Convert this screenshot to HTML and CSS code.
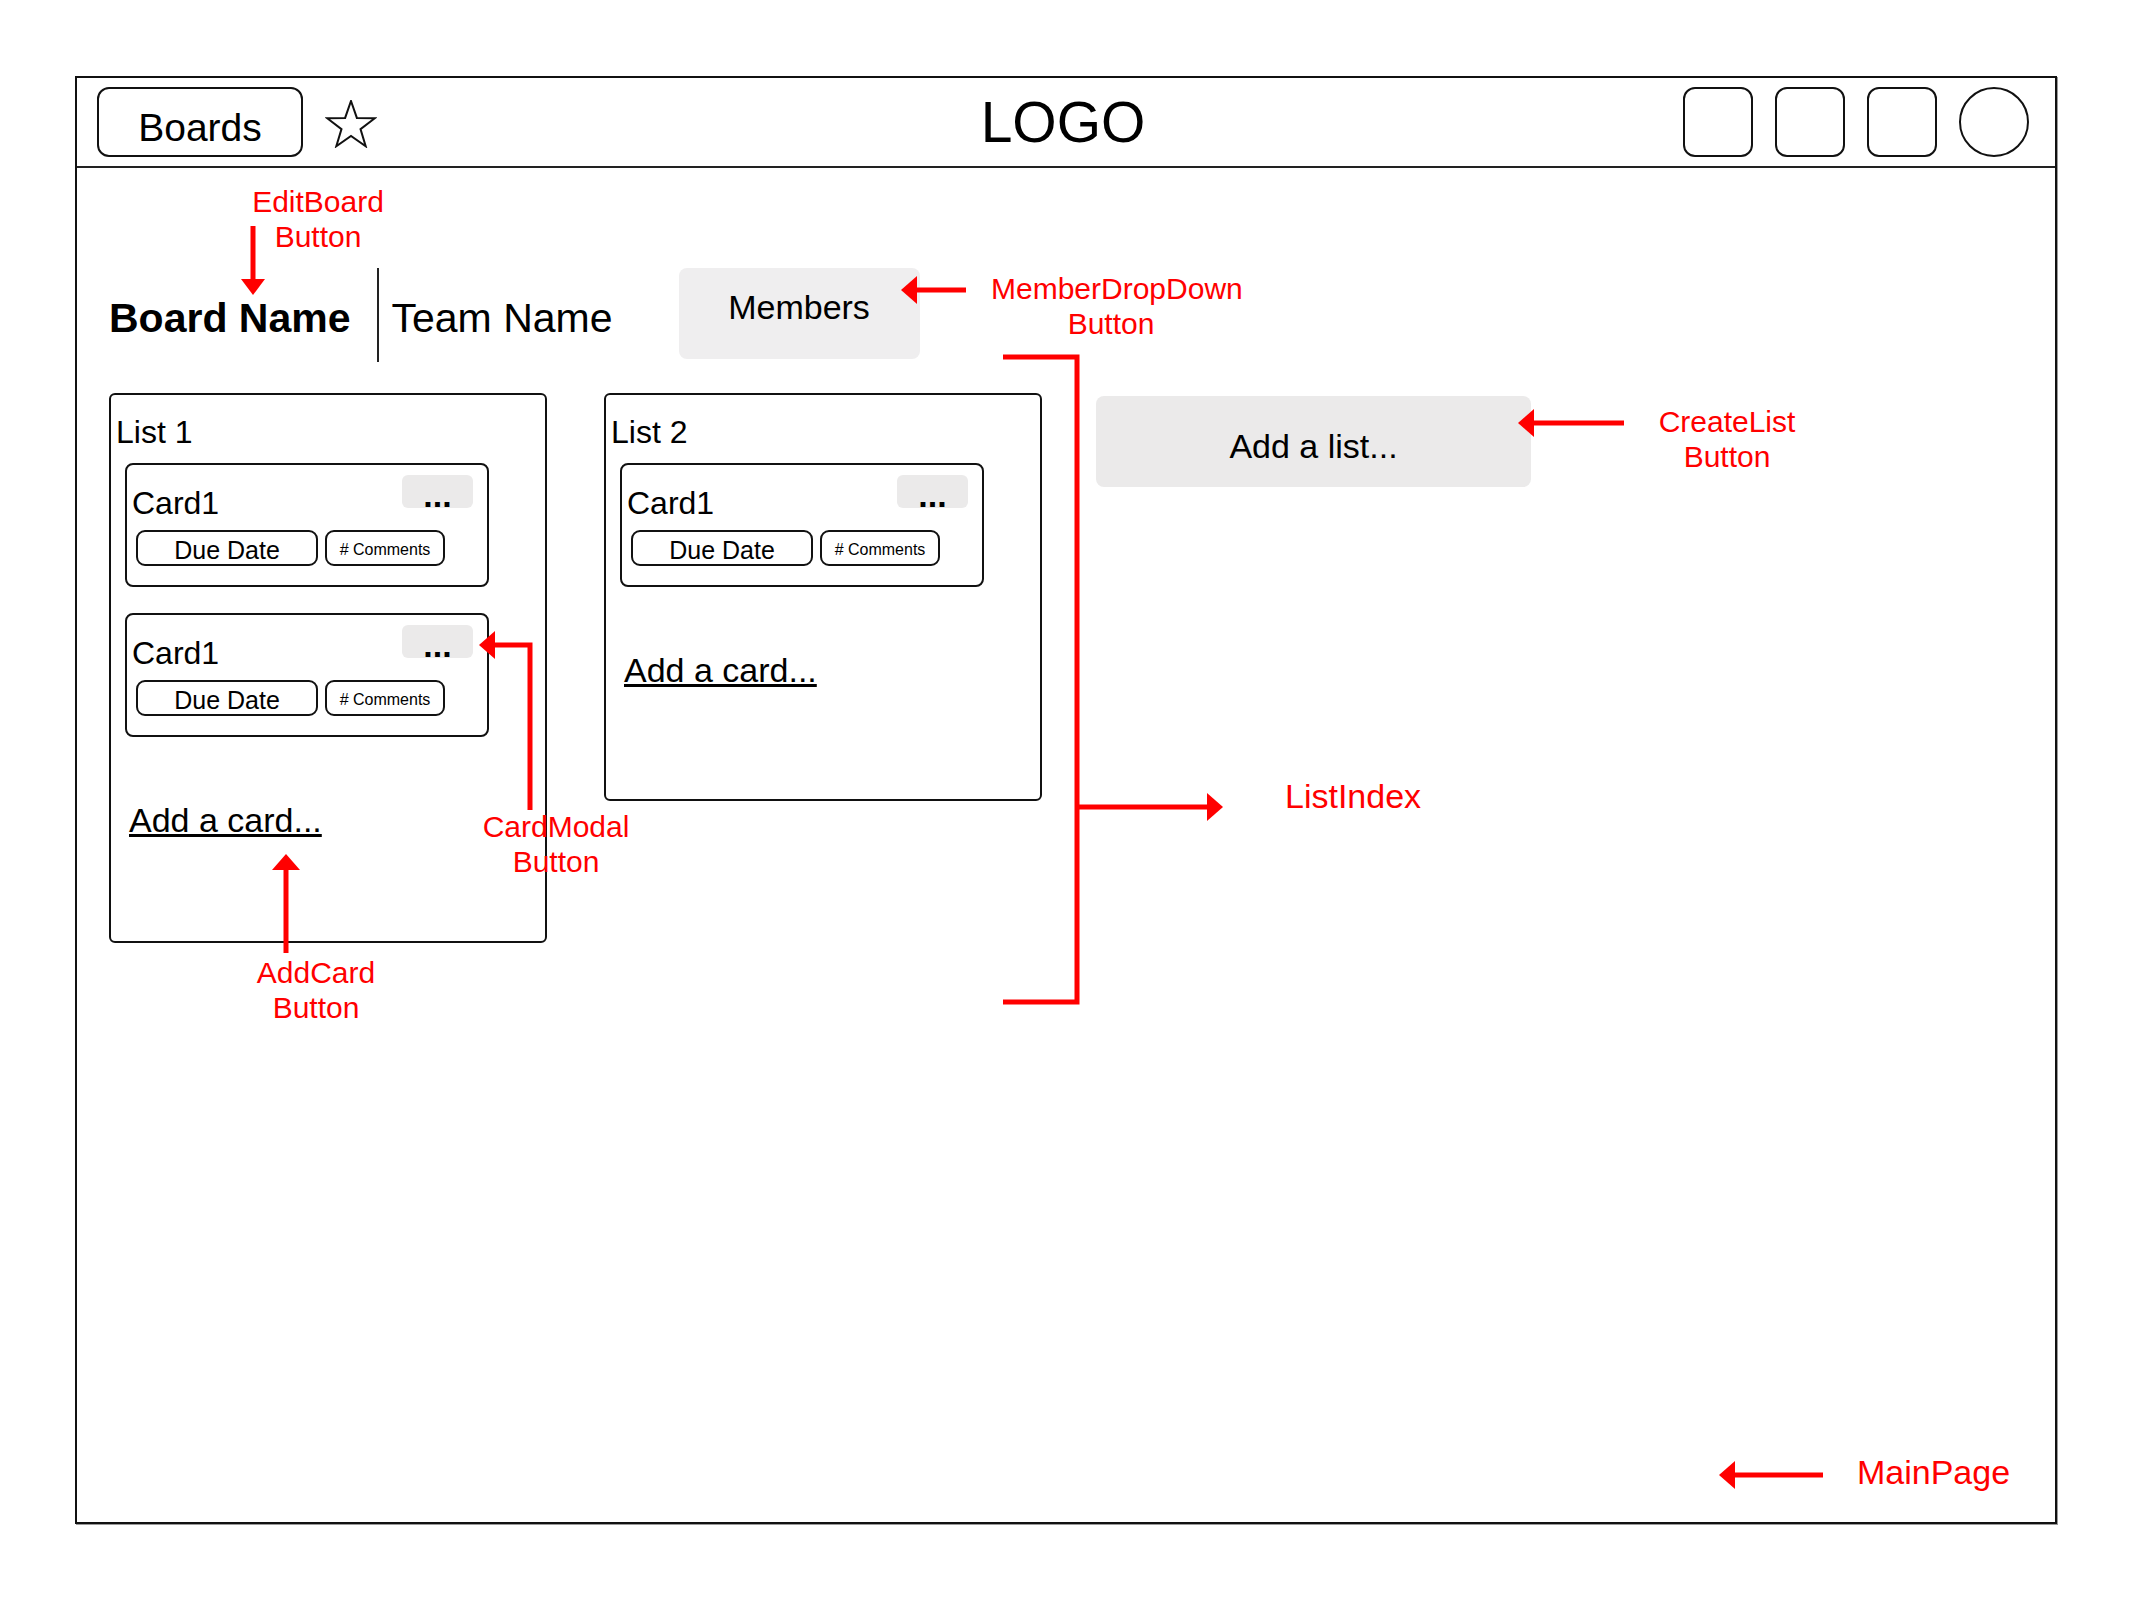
FILE: index.html
```html
<!DOCTYPE html>
<html lang="en">

<head>
    <meta charset="UTF-8">
    <meta name="viewport" content="width=device-width, initial-scale=1.0">
    <title>Board Wireframe</title>
    <link rel="stylesheet" href="styles.css">
</head>

<body>
    <div class="page">
        <div class="main-page">
            <!-- Top navigation -->
            <header class="topbar">
                <div class="topbar-left">
                    <button class="boards-btn">Boards</button>
                    <svg class="star" width="52" height="48" viewBox="0 0 52 48">
                        <polygon points="26,1 31.88,17.91 49.78,18.27 35.51,29.09 40.69,46.23 26,36 11.31,46.23 16.49,29.09 2.22,18.27 20.12,17.91" />
                    </svg>
                </div>
                <div class="logo">LOGO</div>
                <div class="topbar-right">
                    <span class="nav-icon"></span>
                    <span class="nav-icon"></span>
                    <span class="nav-icon"></span>
                    <span class="nav-icon avatar"></span>
                </div>
            </header>

            <div class="board-area">
                <div class="board-bar">
                    <div class="board-name">Board Name</div>
                    <div class="team-name">Team Name</div>
                    <button class="members-btn">Members</button>
                </div>

                <div class="lists">
                    <div class="list">
                        <div class="list-title">List 1</div>
                        <div class="card">
                            <div class="card-top">
                                <div class="card-title">Card1</div>
                                <button class="card-menu"><span>...</span></button>
                            </div>
                            <div class="card-meta">
                                <span class="pill pill-date">Due Date</span>
                                <span class="pill pill-comments"># Comments</span>
                            </div>
                        </div>
                        <div class="card">
                            <div class="card-top">
                                <div class="card-title">Card1</div>
                                <button class="card-menu"><span>...</span></button>
                            </div>
                            <div class="card-meta">
                                <span class="pill pill-date">Due Date</span>
                                <span class="pill pill-comments"># Comments</span>
                            </div>
                        </div>
                        <a href="#" class="add-card">Add a card...</a>
                    </div>

                    <div class="list">
                        <div class="list-title">List 2</div>
                        <div class="card">
                            <div class="card-top">
                                <div class="card-title">Card1</div>
                                <button class="card-menu"><span>...</span></button>
                            </div>
                            <div class="card-meta">
                                <span class="pill pill-date">Due Date</span>
                                <span class="pill pill-comments"># Comments</span>
                            </div>
                        </div>
                        <a href="#" class="add-card">Add a card...</a>
                    </div>

                    <button class="add-list">Add a list...</button>
                </div>
            </div>
        </div>

        <!-- Red annotations drawn over the wireframe -->
        <svg class="arrows" width="2134" height="1600" viewBox="0 0 2134 1600">
            <g class="arrow-lines">
                <line x1="253" y1="226" x2="253" y2="281" />
                <line x1="966" y1="290" x2="915" y2="290" />
                <polyline points="1003,357 1077,357 1077,1002 1003,1002" />
                <line x1="1077" y1="807" x2="1209" y2="807" />
                <line x1="1624" y1="423" x2="1532" y2="423" />
                <polyline points="530,810 530,645 493,645" />
                <line x1="286" y1="953" x2="286" y2="868" />
                <line x1="1823" y1="1475" x2="1733" y2="1475" />
            </g>
            <g class="arrow-heads">
                <polygon points="241,279 265,279 253,295" />
                <polygon points="901,290 917,276 917,304" />
                <polygon points="1223,807 1207,793 1207,821" />
                <polygon points="1518,423 1534,409 1534,437" />
                <polygon points="479,645 495,631 495,659" />
                <polygon points="286,854 272,870 300,870" />
                <polygon points="1719,1475 1735,1461 1735,1489" />
            </g>
        </svg>

        <div class="note note-editboard">EditBoard<br>Button</div>
        <div class="note note-members">MemberDropDown<br>Button</div>
        <div class="note note-createlist">CreateList<br>Button</div>
        <div class="note note-cardmodal">CardModal<br>Button</div>
        <div class="note note-addcard">AddCard<br>Button</div>
        <div class="note note-big note-listindex">ListIndex</div>
        <div class="note note-big note-mainpage">MainPage</div>
    </div>
</body>

</html>
```

FILE: styles.css
```css
body {
    margin: 0;
    padding: 0;
    background-color: #fff;
    color: #000;
    font-family: "Liberation Sans", Arial, Helvetica, sans-serif;
}

button {
    font-family: inherit;
    color: #000;
    cursor: pointer;
}

.page {
    position: relative;
    width: 2134px;
    height: 1600px;
    padding: 76px 0 0 75px;
    box-sizing: border-box;
}

.main-page {
    width: 1982px;
    height: 1448px;
    border: 2px solid #111;
    box-sizing: border-box;
    box-shadow: 1px 1px 0 #999;
}

/* Top bar */
.topbar {
    display: grid;
    grid-template-columns: 1fr auto 1fr;
    align-items: center;
    height: 90px;
    padding: 0 26px 0 20px;
    border-bottom: 2px solid #222;
    box-sizing: border-box;
}

.topbar-left {
    display: flex;
    align-items: center;
    gap: 22px;
}

.boards-btn {
    width: 206px;
    height: 70px;
    padding: 10px 0 0;
    border: 2px solid #111;
    border-radius: 12px;
    background-color: #fff;
    font-size: 39px;
    line-height: 1;
    box-sizing: border-box;
}

.star {
    margin-top: 3px;
}

.star polygon {
    fill: none;
    stroke: #111;
    stroke-width: 2;
}

.logo {
    font-size: 57px;
    line-height: 1;
}

.topbar-right {
    display: flex;
    justify-content: flex-end;
    gap: 22px;
}

.nav-icon {
    width: 70px;
    height: 70px;
    border: 2px solid #111;
    border-radius: 12px;
    box-sizing: border-box;
}

.nav-icon.avatar {
    border-radius: 50%;
}

/* Board header */
.board-area {
    padding: 100px 0 0 32px;
}

.board-bar {
    display: flex;
    align-items: center;
    height: 94px;
}

.board-name {
    padding-top: 6px;
    margin-right: 26px;
    font-size: 41px;
    font-weight: bold;
    line-height: 1;
}

.team-name {
    align-self: stretch;
    display: flex;
    align-items: center;
    padding: 6px 0 0 13px;
    margin-right: 66px;
    border-left: 2px solid #222;
    font-size: 41px;
    line-height: 1;
}

.members-btn {
    align-self: flex-start;
    width: 241px;
    height: 91px;
    padding: 0 0 14px;
    border: none;
    border-radius: 8px;
    background-color: #efeeef;
    font-size: 34px;
    line-height: 1;
}

/* Lists */
.lists {
    display: flex;
    align-items: flex-start;
    gap: 57px;
    margin-top: 31px;
}

.list {
    width: 438px;
    min-height: 408px;
    padding: 21px 0 104px 5px;
    border: 2px solid #111;
    border-radius: 6px;
    box-sizing: border-box;
}

.list-title {
    font-size: 32px;
    line-height: 1;
}

.card {
    width: 364px;
    margin: 15px 0 0 9px;
    padding: 10px 14px 19px 5px;
    border: 2px solid #111;
    border-radius: 8px;
    box-sizing: border-box;
}

.card + .card {
    margin-top: 26px;
}

.card-top {
    display: flex;
    justify-content: space-between;
    align-items: flex-start;
}

.card-title {
    margin-top: 12px;
    font-size: 32px;
    line-height: 1;
}

.card-menu {
    display: flex;
    align-items: flex-end;
    justify-content: center;
    width: 71px;
    height: 33px;
    padding: 0;
    border: none;
    border-radius: 6px;
    background-color: #ebeaea;
    font-size: 34px;
    font-weight: bold;
    line-height: 1;
}

.card-menu span {
    margin-bottom: -4px;
}

.card-meta {
    display: flex;
    gap: 7px;
    margin: 11px 0 0 4px;
}

.pill {
    display: flex;
    align-items: center;
    justify-content: center;
    height: 36px;
    border: 2px solid #111;
    border-radius: 9px;
    line-height: 1;
    box-sizing: border-box;
}

.pill-date {
    width: 182px;
    padding-top: 4px;
    font-size: 25px;
}

.pill-comments {
    width: 120px;
    padding-top: 3px;
    font-size: 16px;
}

.add-card {
    display: inline-block;
    margin: 66px 0 0 13px;
    color: #000;
    font-size: 34px;
    line-height: 1;
    text-decoration: underline;
}

.add-list {
    width: 435px;
    height: 91px;
    margin: 3px 0 0 -3px;
    padding: 9px 0 0;
    border: none;
    border-radius: 8px;
    background-color: #ebeaea;
    font-size: 34px;
    line-height: 1;
}

/* Annotations */
.arrows {
    position: absolute;
    top: 0;
    left: 0;
    pointer-events: none;
}

.arrow-lines line,
.arrow-lines polyline {
    fill: none;
    stroke: #ff0000;
    stroke-width: 5;
}

.arrow-heads polygon {
    fill: #ff0000;
}

.note {
    position: absolute;
    width: 240px;
    color: #ff0000;
    font-size: 30px;
    line-height: 35px;
    text-align: center;
}

.note-big {
    width: auto;
    font-size: 34px;
    line-height: 40px;
    text-align: left;
}

.note-editboard {
    left: 198px;
    top: 184px;
}

.note-members {
    left: 991px;
    top: 271px;
}

.note-createlist {
    left: 1607px;
    top: 404px;
}

.note-cardmodal {
    left: 436px;
    top: 809px;
}

.note-addcard {
    left: 196px;
    top: 955px;
}

.note-listindex {
    left: 1285px;
    top: 776px;
}

.note-mainpage {
    left: 1857px;
    top: 1452px;
}
```
